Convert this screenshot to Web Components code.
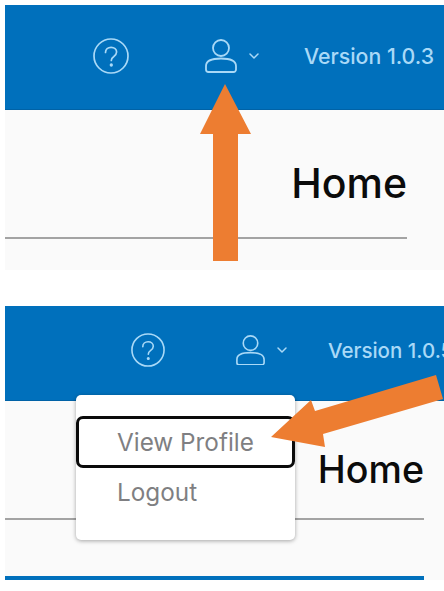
<!DOCTYPE html>
<html>
<head>
<meta charset="utf-8">
<title>Home</title>
<style>
    html, body { margin: 0; background: #fff; }
    body { width: 444px; height: 591px; position: relative; overflow: hidden; font-family: Inter, "Liberation Sans", sans-serif; }
    .pagina { display: flex; flex-direction: column; gap: 36px; padding: 5px 0 0 5px; }
</style>
</head>
<body>
<div class="pagina">
    <app-panel version="Version 1.0.3" style="--alto-barra:105px;--alto:265px;--centro:2px;--icono-help:36px;--pad-help:88px;--gap-help:76px;--icono-user:32px;--gap-ver:44px;--version:21.300px;--titulo:41px;--titulo-ancho:402px;--titulo-alto:129px;--titulo-pad:18px"></app-panel>
    <app-panel version="Version 1.0.5" borde style="--alto-barra:95px;--alto:274px;--centro:6px;--icono-help:34px;--pad-help:126px;--gap-help:71px;--icono-user:29px;--gap-ver:40px;--version:20.500px;--titulo:37.600px;--titulo-ancho:419px;--titulo-alto:119px;--titulo-pad:19px">
        <user-menu>
            <menu-item focused>View Profile</menu-item>
            <menu-item class="ultimo">Logout</menu-item>
        </user-menu>
    </app-panel>
</div>
<pointer-arrow points="225,84 251,134 238,134 238,261 213,261 213,134 200,134"></pointer-arrow>
<pointer-arrow points="271,437 311,400 315,411 436,375 443,399 323,434 325,447"></pointer-arrow>

<script>
class AppPanel extends HTMLElement {
    constructor() {
        super();
        this._root = this.attachShadow({ mode: "open" });
        this._root.innerHTML = `
        <style>
            :host { display: block; position: relative; width: 439px; height: var(--alto); background: #fafafa; overflow: hidden; }
            .barra {
                display: flex;
                align-items: center;
                height: var(--alto-barra);
                box-sizing: border-box;
                padding-left: var(--pad-help);
                padding-bottom: var(--centro);
                background: #0070bc;
                border-bottom: 1px solid #0062a6;
                color: #a9d9f7;
            }
            .help { width: var(--icono-help); height: var(--icono-help); flex: none; }
            .user { width: var(--icono-user); height: auto; flex: none; margin-left: var(--gap-help); }
            .chevron { width: 12px; height: 12px; flex: none; margin-left: 11px; }
            .version { margin-left: var(--gap-ver); font-size: var(--version); font-weight: 500; white-space: nowrap; }
            .titulo {
                display: flex;
                justify-content: flex-end;
                align-items: center;
                box-sizing: border-box;
                width: var(--titulo-ancho);
                height: var(--titulo-alto);
                padding-top: var(--titulo-pad);
                border-bottom: 2px solid #a3a3a3;
                font-size: var(--titulo);
                font-weight: 500;
                color: #0b0b0b;
            }
            .pie { position: absolute; left: 0; bottom: 0; width: 419px; height: 4px; background: #0070bc; display: none; }
            :host([borde]) .pie { display: block; }
        </style>
        <div class="barra">
            <svg class="help" viewBox="0 0 36 36" fill="none" stroke="currentColor" stroke-width="1.7" stroke-linecap="round">
                <circle cx="18" cy="18" r="17"/>
                <path d="M12.5 14.5c0-3.2 2.5-5.2 5.6-5.2 3.200 0 5.500 2 5.500 4.800 0 2.300-1.300 3.400-3 4.600-1.500 1-2.300 1.900-2.300 3.800"/>
                <circle cx="18.300" cy="27" r=".8" fill="currentColor"/>
            </svg>
            <svg class="user" viewBox="0 0 32 34" fill="none" stroke="currentColor" stroke-width="1.8">
                <circle cx="16" cy="9" r="8"/>
                <path d="M1 27c0-5 5-7.500 15-7.500S31 22 31 27v3.500a2.500 2.500 0 0 1-2.500 2.500h-25A2.500 2.500 0 0 1 1 30.500z"/>
            </svg>
            <svg class="chevron" viewBox="0 0 12 12" fill="none" stroke="currentColor" stroke-width="1.500" stroke-linecap="round" stroke-linejoin="round">
                <path d="M2 4l4 4 4-4"/>
            </svg>
            <span class="version"></span>
        </div>
        <div class="titulo">Home</div>
        <div class="pie"></div>
        <slot></slot>
        `;
        this._$version = this._root.querySelector('.version');
    }
    connectedCallback() {
        this._$version.textContent = this.getAttribute('version');
    }
}
window.customElements.define('app-panel', AppPanel);

class UserMenu extends HTMLElement {
    constructor() {
        super();
        this.attachShadow({ mode: "open" }).innerHTML = `
        <style>
            :host {
                position: absolute;
                left: 71px;
                top: 89px;
                width: 219px;
                height: 145px;
                box-sizing: border-box;
                padding-top: 21px;
                background: #fff;
                border-radius: 5px;
                box-shadow: 0 1px 4px rgba(0,0,0,.35);
            }
        </style>
        <slot></slot>
        `;
    }
}
window.customElements.define('user-menu', UserMenu);

class MenuItem extends HTMLElement {
    constructor() {
        super();
        this.attachShadow({ mode: "open" }).innerHTML = `
        <style>
            :host {
                display: flex;
                align-items: center;
                box-sizing: border-box;
                height: 52px;
                padding-left: 38px;
                border: 3px solid transparent;
                border-radius: 7px;
                font-size: 24.300px;
                color: #7f7f82;
            }
            :host(.ultimo) { padding-bottom: 4px; }
            :host([focused]) { border-color: #0a0a0a; }
        </style>
        <slot></slot>
        `;
    }
}
window.customElements.define('menu-item', MenuItem);

class PointerArrow extends HTMLElement {
    constructor() {
        super();
        this.attachShadow({ mode: "open" }).innerHTML = `
        <style>
            :host { position: absolute; left: 0; top: 0; width: 444px; height: 591px; pointer-events: none; }
            svg { display: block; }
        </style>
        <svg width="444" height="591" viewBox="0 0 444 591"><polygon fill="#ed7d31"></polygon></svg>
        `;
    }
    connectedCallback() {
        this.shadowRoot.querySelector('polygon').setAttribute('points', this.getAttribute('points'));
    }
}
window.customElements.define('pointer-arrow', PointerArrow);
</script>
</body>
</html>
